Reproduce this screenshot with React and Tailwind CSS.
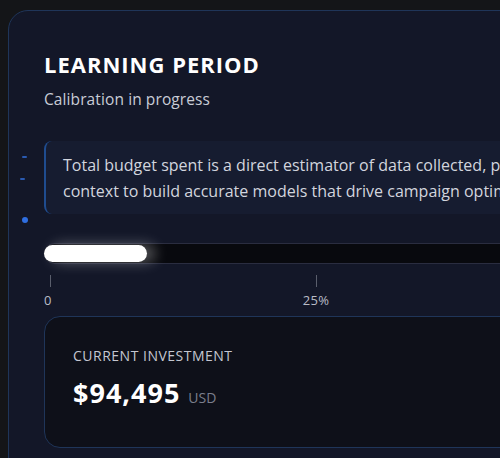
export default function App() {
  return (
    <div
      className="w-[500px] h-[458px] overflow-hidden bg-[#141518] pt-[10px] pl-[8px]"
      style={{ fontFamily: '"Open Sans", "Noto Sans", sans-serif' }}
    >
      {/* main card */}
      <div className="relative w-[600px] h-[520px] rounded-tl-[20px] border border-[#1f3559] bg-[#131728] pl-[35px] pt-[39px]">
        {/* left rail marks */}
        <div className="absolute left-[13px] top-[145px] h-[2px] w-[5px] rounded bg-[#2a5ab0]" />
        <div className="absolute left-[11px] top-[167px] h-[2px] w-[5px] rounded bg-[#2a5ab0]" />
        <div className="absolute left-[13px] top-[206px] h-[6px] w-[6px] rounded-full bg-[#2f6ee0]" />

        <h1 className="text-[22px] font-bold leading-[28px] tracking-[1px] text-white">
          LEARNING PERIOD
        </h1>
        <p className="mt-[11px] text-[15.5px] leading-[20px] tracking-[0.1px] text-[#c9ccd6]">
          Calibration in progress
        </p>

        {/* info note */}
        <div className="mt-[32px] h-[73px] w-[600px] rounded-l-[8px] border-l-2 border-[#1f4c8f] bg-[#161c30] pl-[17px] pt-[11px] text-[16px] leading-[26px] text-[#d2d5de] whitespace-nowrap">
          <div>Total budget spent is a direct estimator of data collected, providing</div>
          <div>context to build accurate models that drive campaign optimization.</div>
        </div>

        {/* progress */}
        <div className="mt-[29px] h-[21px] w-[600px] rounded-l-full border-y border-[#2a2d40] bg-[#08090e] pt-px">
          <div className="h-[17px] w-[103px] rounded-full bg-white shadow-[8px_0_14px_rgba(255,255,255,0.35)]" />
        </div>

        {/* axis ticks */}
        <div className="flex w-[600px] pt-[11px] text-[13px] leading-[18px] text-[#b9bcc7]">
          <div className="flex w-[242px] flex-col items-start">
            <div className="ml-[6px] h-[12px] w-px bg-[#5a5e6c]" />
            <span className="mt-[4px]">0</span>
          </div>
          <div className="flex w-[60px] flex-col items-center">
            <div className="h-[12px] w-px bg-[#5a5e6c]" />
            <span className="mt-[4px] tracking-[0.3px]">25%</span>
          </div>
        </div>

        {/* investment card */}
        <div className="mt-[7px] h-[132px] w-[600px] rounded-[16px] border border-[#1f3559] bg-[#0e1019] pl-[28px] pt-[30px]">
          <div className="text-[14px] leading-[18px] tracking-[0.5px] text-[#c4c7d1]">
            CURRENT INVESTMENT
          </div>
          <div className="mt-[12px] flex items-baseline gap-[8px]">
            <span className="text-[27px] font-bold leading-[32px] tracking-[1px] text-white">$94,495</span>
            <span className="text-[14px] text-[#7b7f8c]">USD</span>
          </div>
        </div>
      </div>
    </div>
  );
}
